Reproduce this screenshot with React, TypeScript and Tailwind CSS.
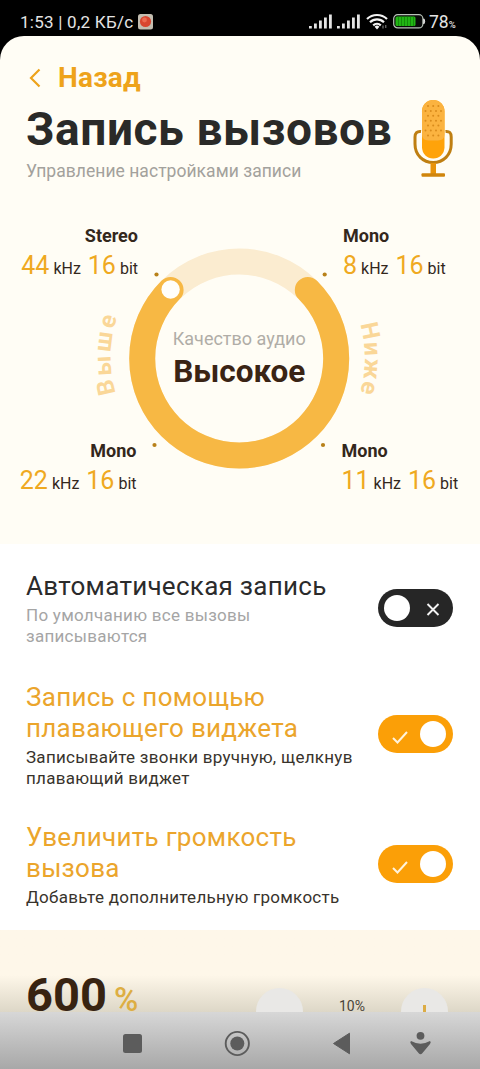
import { useState } from "react";
import clsx from "clsx";

/* ---- Status bar ---- */

function SignalBars() {
  return (
    <svg width="23" height="15" viewBox="0 0 23 15" fill="#e4e4e4">
      <rect x="0" y="12" width="2.8" height="2.5" />
      <rect x="5" y="9.5" width="2.8" height="5" />
      <rect x="10" y="6.5" width="2.8" height="8" />
      <rect x="15" y="3.5" width="2.8" height="11" />
      <rect x="20" y="0.5" width="2.8" height="14" />
    </svg>
  );
}

function WifiIcon() {
  return (
    <svg width="22" height="17" viewBox="0 0 22 17" fill="none" stroke="#f4f4f4" strokeWidth="2.2">
      <path d="M1 6 A14.5 14.5 0 0 1 21 6" />
      <path d="M4 9.3 A10 10 0 0 1 18 9.3" />
      <path d="M7.2 12.4 A5.6 5.6 0 0 1 14.8 12.4" />
      <path d="M8.6 13.8 L11 16.5 L13.4 13.8 A3.4 3.4 0 0 0 8.6 13.8 Z" fill="#f4f4f4" stroke="none" />
      <path d="M17 12.5v3M19.8 12v3" strokeWidth="1" stroke="#8a8a8a" />
    </svg>
  );
}

function BatteryIcon() {
  return (
    <svg width="33" height="15" viewBox="0 0 33 15">
      <rect x="0.7" y="0.7" width="29.2" height="13.2" rx="4" fill="#0a0a0a" stroke="#b9c4b9" strokeWidth="1.2" />
      <path d="M30.8 4.8 Q32.6 7.3 30.8 9.8 Z" fill="#f0f0f0" stroke="#f0f0f0" />
      <rect x="2.5" y="2.6" width="20" height="9.4" rx="1.5" fill="#21b514" />
      <path d="M5.5 2.6v9.4M8.5 2.6v9.4M11.5 2.6v9.4M14.5 2.6v9.4M17.5 2.6v9.4M20.5 2.6v9.4" stroke="#128209" strokeWidth="0.8" />
    </svg>
  );
}

function StatusBar() {
  return (
    <div className="flex h-9 shrink-0 items-start bg-black pl-5 text-[#e4e4e4]">
      <span className="mt-3 w-[115px] whitespace-nowrap text-[17px] leading-5 tracking-[0.25px]">1:53 | 0,2 КБ/с</span>
      <svg className="ml-[3px] mt-[13.5px]" width="15" height="16" viewBox="0 0 15 16">
        <rect width="15" height="15.5" rx="2.5" fill="#c3bdb0" />
        <circle cx="7.5" cy="7.5" r="5.6" fill="#d8452f" />
        <circle cx="6.5" cy="6" r="2.4" fill="#ec6a50" />
      </svg>
      <div className="ml-[155.5px] mt-[14px] flex">
        <SignalBars />
        <div className="w-[5.5px]" />
        <SignalBars />
      </div>
      <div className="ml-[5.5px] mt-[13px]">
        <WifiIcon />
      </div>
      <div className="ml-[5.5px] mt-[14px]">
        <BatteryIcon />
      </div>
      <span className="ml-[3px] mt-3 whitespace-nowrap text-[17.5px] leading-5">
        78<span className="text-[9.5px] font-medium">%</span>
      </span>
    </div>
  );
}

/* ---- Header ---- */

function MicIcon() {
  const rows = [0, 1, 2, 3, 4, 5, 6];
  return (
    <svg width="40" height="78" viewBox="0 0 40 78">
      <rect x="9" y="0" width="22.5" height="58.5" rx="11.2" fill="#ffa30a" />
      <path d="M9 11.2 A11.2 11.2 0 0 1 31.5 11.2 V34 Q31.5 40.5 25 40.5 H15.5 Q9 40.5 9 34 Z" fill="#fbb340" />
      {rows.map((r) =>
        (r % 2 ? [12.5, 17.8, 23, 28] : [15, 20.2, 25.4]).map((x) => (
          <circle key={`${r}-${x}`} cx={x} cy={6 + r * 4.9} r="1" fill="#d98b1b" />
        )),
      )}
      <path
        d="M8 31.5 C4 31 2 33 2 37 V44 C2 55 10 62.5 20.2 62.5 S38.2 55 38.2 44 V37 C38.2 33 36.5 31 32.5 31.5"
        fill="none"
        stroke="#bf7f12"
        strokeWidth="3"
      />
      <rect x="17.5" y="63" width="5.5" height="11" fill="#e8930a" />
      <rect x="8.5" y="73.3" width="23.5" height="3.4" rx="1" fill="#d0850c" />
    </svg>
  );
}

function Header() {
  return (
    <header className="flex h-[153px] shrink-0 justify-between pl-[26px] pr-[27px]">
      <div className="whitespace-nowrap">
        <button className="mt-[24px] flex h-9 items-center text-[#eea31b]">
          <svg className="ml-[3px]" width="12" height="20" viewBox="0 0 12 20" fill="none" stroke="currentColor" strokeWidth="2.2">
            <path d="M10.5 1.5 L2 10 L10.5 18.5" />
          </svg>
          <span className="ml-[17px] text-[28px] font-bold leading-9 tracking-[0.2px]">Назад</span>
        </button>
        <h1 className="mt-[5px] text-[46px] font-bold leading-[56px] tracking-[0.6px] text-[#2a2a28]">Запись вызовов</h1>
        <p className="mt-[4px] text-[17.5px] leading-5 tracking-[0.04px] text-[#a3a19c]">Управление настройками записи</p>
      </div>
      <div className="mt-[64px]">
        <MicIcon />
      </div>
    </header>
  );
}

/* ---- Quality dial ---- */

interface QualityProps {
  mode: string;
  rate: number;
  className?: string;
}

function Quality({ mode, rate, className }: QualityProps) {
  return (
    <div className={clsx("whitespace-nowrap text-[#33271c]", className)}>
      <div className="text-[18px] font-bold leading-6">{mode}</div>
      <div className="mt-[2px] text-[16px] leading-8">
        <span className="text-[25px] text-[#efa921]">{rate}</span> kHz{" "}
        <span className="ml-[3px] text-[25px] text-[#efa921]">16</span> bit
      </div>
    </div>
  );
}

function QualityDial() {
  return (
    <section className="grid h-[355px] shrink-0">
      <svg className="col-start-1 row-start-1" width="480" height="355" viewBox="0 189 480 355">
        <defs>
          <path id="higher" d="M138 436 A128 128 0 0 1 138 278" />
          <path id="lower" d="M339.5 283 A125 125 0 0 1 339.5 434" />
        </defs>
        <circle cx="239.2" cy="358.5" r="97" fill="none" stroke="#fbecd0" strokeWidth="26" />
        <path
          d="M307.8 289.9 A97 97 0 1 1 170.6 289.9"
          fill="none"
          stroke="#f7b844"
          strokeWidth="26"
          strokeLinecap="round"
        />
        <circle cx="170.6" cy="289.5" r="9.2" fill="#fffefa" />
        <g fill="#b88119">
          <circle cx="156.5" cy="274.5" r="2.1" />
          <circle cx="324.7" cy="274.5" r="2.1" />
          <circle cx="154.5" cy="445" r="2.1" />
          <circle cx="323" cy="445" r="2.1" />
        </g>
        <g fill="#fad798" fontSize="24" fontWeight="700" textAnchor="middle">
          <text letterSpacing="3">
            <textPath href="#higher" startOffset="52%">Выше</textPath>
          </text>
          <text letterSpacing="1.8">
            <textPath href="#lower" startOffset="50.5%">Ниже</textPath>
          </text>
        </g>
      </svg>
      <div className="col-start-1 row-start-1 flex flex-col items-center pr-[1.5px] pt-[137.5px]">
        <span className="text-[18px] leading-6 text-[#b0ada7]">Качество аудио</span>
        <span className="mt-[1.5px] text-[31.5px] font-bold leading-10 text-[#3a2414]">Высокое</span>
      </div>
      <div className="col-start-1 row-start-1 flex justify-between pt-[34.5px]">
        <div className="flex w-[138px] flex-col items-end text-right">
          <Quality mode="Stereo" rate={44} />
          <Quality mode="Mono" rate={22} className="mt-[154.5px] pr-[1.5px]" />
        </div>
        <div className="flex w-[138.5px] flex-col">
          <Quality mode="Mono" rate={8} className="pl-[1.5px]" />
          <Quality mode="Mono" rate={11} className="mt-[154.5px]" />
        </div>
      </div>
    </section>
  );
}

/* ---- Toggle rows ---- */

function Toggle({ on, onClick }: { on: boolean; onClick: () => void }) {
  return (
    <button
      role="switch"
      aria-checked={on}
      onClick={onClick}
      className={clsx(
        "mb-[3px] flex h-[38px] w-[75px] shrink-0 items-center justify-between rounded-full",
        on ? "flex-row-reverse bg-[#fb9f07] pl-[14px] pr-[6.5px]" : "bg-[#262626] pl-[6.5px] pr-[13px]",
      )}
    >
      <span className="size-[26px] rounded-full bg-white" />
      {on ? (
        <svg className="mt-[8px]" width="16" height="13" viewBox="0 0 16 13" fill="none" stroke="#fff3dc" strokeWidth="2">
          <path d="M1 7 L5.5 11.5 L15 1" />
        </svg>
      ) : (
        <svg className="mt-[4px]" width="14" height="13" viewBox="0 0 14 13" fill="none" stroke="#f2f2f2" strokeWidth="1.9">
          <path d="M1.5 1 L12.5 12 M12.5 1 L1.5 12" />
        </svg>
      )}
    </button>
  );
}

interface SettingRowProps {
  title: string[];
  text: string[];
  initial: boolean;
  className: string;
}

function SettingRow({ title, text, initial, className }: SettingRowProps) {
  const [on, setOn] = useState(initial);
  return (
    <div className={clsx("flex items-center justify-between whitespace-nowrap pl-[26px] pr-[27.5px]", className)}>
      <div>
        <h2 className={clsx("text-[26px] leading-[31px] tracking-[0.28px]", on ? "text-[#eba52c]" : "text-[#2b2b2b]")}>
          {title.map((line) => (
            <span key={line} className="block">{line}</span>
          ))}
        </h2>
        <p className={clsx("mt-[3px] text-[17px] leading-[21px] tracking-[0.27px]", on ? "text-[#38332c]" : "text-[#a5a5a5]")}>
          {text.map((line) => (
            <span key={line} className="block">{line}</span>
          ))}
        </p>
      </div>
      <Toggle on={on} onClick={() => setOn(!on)} />
    </div>
  );
}

/* ---- Volume + system navigation ---- */

function VolumePanel() {
  return (
    <section className="flex h-[82px] shrink-0 bg-linear-to-b from-[#fef7e9] from-55% to-[#ddd7c7] pl-[26px]">
      <div className="flex w-[230px] items-baseline pt-[37px]">
        <span className="text-[47px] font-bold leading-[56px] text-[#382311]">600</span>
        <span className="ml-[7px] text-[33px] font-medium leading-8 text-[#ddae43]">%</span>
      </div>
      <div className="mt-[58px] size-[47px] shrink-0 rounded-full bg-[#e9e8e6]" />
      <span className="mt-[66px] w-[98px] text-center text-[14px] leading-5 text-[#4a4439]">10%</span>
      <div className="mt-[58px] flex size-[47px] shrink-0 justify-center rounded-full bg-[#e9e8e6]">
        <span className="mt-[17px] h-[7px] w-[2.5px] bg-[#dcac45]" />
      </div>
    </section>
  );
}

function NavBar() {
  return (
    <nav className="h-[57px] shrink-0 bg-linear-to-b from-[#d7d7d7] to-[#a8a8a8]">
      <svg width="480" height="57" viewBox="0 1012 480 57" fill="#5c5c5c">
        <rect x="123" y="1034" width="19" height="19" rx="2.5" />
        <circle cx="237.3" cy="1043.5" r="11.6" fill="none" stroke="#5c5c5c" strokeWidth="1.9" />
        <circle cx="237.3" cy="1043.5" r="7" />
        <path d="M333.5 1043.5 L349.5 1033.2 V1053.8 Z" stroke="#5c5c5c" strokeLinejoin="round" />
        <circle cx="420.5" cy="1035.8" r="3.9" />
        <path d="M411 1041 Q420.5 1046.3 430 1041 Q431.5 1042 430 1044 L422.5 1053 Q420.5 1055.5 418.5 1053 L411 1044 Q409.5 1042 411 1041 Z" />
      </svg>
    </nav>
  );
}

export default function App() {
  return (
    <div className="flex h-[1069px] w-[480px] flex-col bg-black font-['Roboto','Noto_Sans',sans-serif]">
      <StatusBar />
      <main className="flex shrink-0 flex-col rounded-t-[24px] bg-[#fffdf5]">
        <Header />
        <QualityDial />
        <section className="h-[386px] shrink-0 bg-white pt-[27.5px]">
          <SettingRow
            className="h-[75px]"
            initial={false}
            title={["Автоматическая запись"]}
            text={["По умолчанию все вызовы", "записываются"]}
          />
          <SettingRow
            className="mt-[35px] h-[107px]"
            initial
            title={["Запись с помощью", "плавающего виджета"]}
            text={["Записывайте звонки вручную, щелкнув", "плавающий виджет"]}
          />
          <SettingRow
            className="mt-[33px] h-[87px]"
            initial
            title={["Увеличить громкость", "вызова"]}
            text={["Добавьте дополнительную громкость"]}
          />
        </section>
        <VolumePanel />
      </main>
      <NavBar />
    </div>
  );
}
